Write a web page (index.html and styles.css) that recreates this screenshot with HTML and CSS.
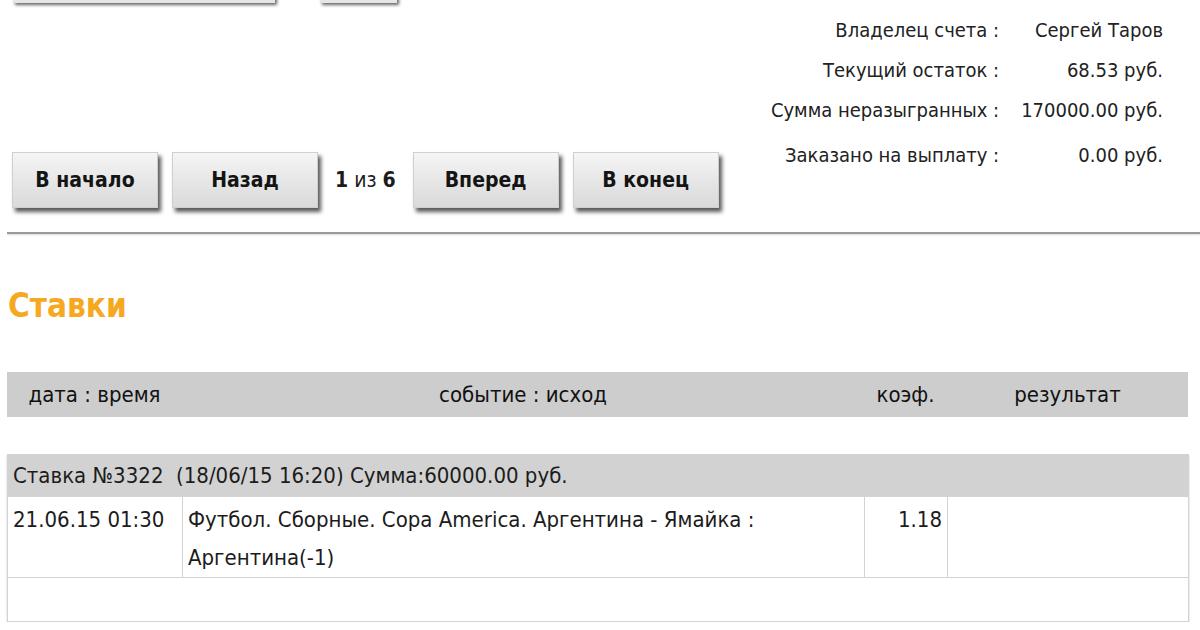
FILE: index.html
```html
<!DOCTYPE html>
<html lang="ru">

<head>
  <meta charset="UTF-8">
  <title>Ставки</title>
  <link rel="stylesheet" href="styles.css">
</head>

<body>
  <!-- обрезанная форма сверху -->
  <div class="topbar">
    <div class="stub stub-wide"></div>
    <div class="stub stub-small"></div>
  </div>

  <div class="account">
    <div class="pager">
      <button class="btn">В начало</button>
      <button class="btn">Назад</button>
      <span class="pages"><b>1</b> из <b>6</b></span>
      <button class="btn">Вперед</button>
      <button class="btn">В конец</button>
    </div>

    <table class="summary">
      <tr>
        <td class="label">Владелец счета :</td>
        <td class="value">Сергей Таров</td>
      </tr>
      <tr>
        <td class="label">Текущий остаток :</td>
        <td class="value">68.53 руб.</td>
      </tr>
      <tr>
        <td class="label">Сумма неразыгранных :</td>
        <td class="value">170000.00 руб.</td>
      </tr>
      <tr class="last">
        <td class="label">Заказано на выплату :</td>
        <td class="value">0.00 руб.</td>
      </tr>
    </table>
  </div>

  <div class="rule"></div>

  <h2 class="title">Ставки</h2>

  <table class="bets bets-head">
    <colgroup>
      <col class="c-date">
      <col class="c-event">
      <col class="c-coef">
      <col class="c-result">
    </colgroup>
    <tr>
      <th>дата : время</th>
      <th>событие : исход</th>
      <th>коэф.</th>
      <th>результат</th>
    </tr>
  </table>

  <table class="bets bets-body">
    <colgroup>
      <col class="c-date">
      <col class="c-event">
      <col class="c-coef">
      <col class="c-result">
    </colgroup>
    <tr class="group">
      <td colspan="4">Ставка №3322&nbsp; (18/06/15 16:20) Сумма:60000.00 руб.</td>
    </tr>
    <tr class="item">
      <td>21.06.15 01:30</td>
      <td>Футбол. Сборные. Copa America. Аргентина - Ямайка :<br>Аргентина(-1)</td>
      <td class="num">1.18</td>
      <td></td>
    </tr>
    <tr class="empty">
      <td colspan="4"></td>
    </tr>
  </table>
</body>

</html>
```

FILE: styles.css
```css
body {
  margin: 0;
  background: #fff;
  color: #1c1c1c;
  font-family: "DejaVu Sans Condensed", "DejaVu Sans", sans-serif;
  font-size: 22px;
}

/* полоска формы, уходящая за верх */
.topbar {
  display: flex;
  gap: 45px;
  height: 4px;
  padding-left: 13px;
}

.stub {
  height: 40px;
  margin-top: -37px;
  background: #e6e6e6;
  box-shadow: 2px 2px 3px rgba(0, 0, 0, .6);
}

.stub-wide {
  width: 262px;
}

.stub-small {
  width: 77px;
}

/* верхний блок: пейджер и счет */
.account {
  display: flex;
  justify-content: space-between;
  align-items: flex-start;
  padding: 0 37px 0 12px;
  height: 228px;
}

.pager {
  display: flex;
  align-items: center;
  gap: 14px;
  margin-top: 148px;
}

.btn {
  width: 146px;
  height: 56px;
  border: 1px solid #cfcfcf;
  background: linear-gradient(180deg, #f5f5f5, #d9d9d9);
  box-shadow: 3px 4px 4px rgba(0, 0, 0, .65);
  font-family: inherit;
  font-size: 21px;
  font-weight: bold;
  color: #141414;
  padding: 0;
}

.pages {
  padding: 0 3px;
  font-size: 21px;
  white-space: nowrap;
}

.summary {
  border-collapse: collapse;
  margin-top: 6px;
  color: #222;
  font-size: 20px;
  white-space: nowrap;
}

.summary td {
  height: 40px;
  padding: 0;
  text-align: right;
}

.summary .value {
  padding-left: 22px;
}

.summary .last td {
  height: 50px;
}

/* разделитель */
.rule {
  height: 2px;
  margin-left: 7px;
  background: #9a9a9a;
  box-shadow: 0 1px 2px rgba(0, 0, 0, .15);
}

.title {
  margin: 52px 0 0 8px;
  height: 86px;
  font-size: 33px;
  line-height: 40px;
  color: #f6a821;
}

/* таблица ставок */
.bets {
  width: 1181px;
  margin-left: 7px;
  border-collapse: collapse;
  table-layout: fixed;
}

.c-date {
  width: 175px;
}

.c-event {
  width: 682px;
}

.c-coef {
  width: 83px;
}

.c-result {
  width: 241px;
}

.bets-head th {
  height: 45px;
  padding: 0;
  background: #cdcdcd;
  font-weight: normal;
  color: #111;
}

.bets-body {
  margin-top: 37px;
  border: 1px solid #d3d3d3;
  box-shadow: 0 2px 2px rgba(0, 0, 0, .2);
}

.bets-body td {
  padding: 4px 5px 0;
  vertical-align: top;
  line-height: 38px;
  border: 1px solid #d3d3d3;
}

.bets-body .group td {
  height: 41px;
  padding-top: 0;
  background: #d2d2d2;
  vertical-align: middle;
  line-height: 1;
}

.bets-body .item td {
  height: 75px;
}

.bets-body .num {
  text-align: right;
}

.bets-body .empty td {
  height: 43px;
  padding: 0;
  line-height: 1;
}
```
